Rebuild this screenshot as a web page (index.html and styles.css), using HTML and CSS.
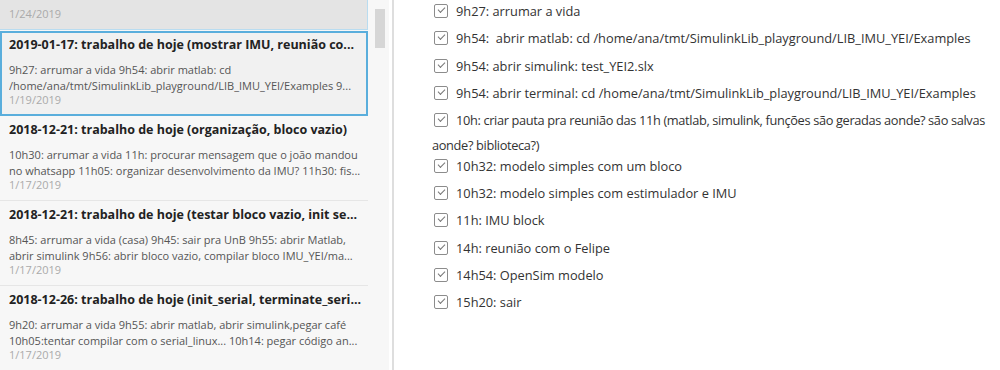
FILE: index.html
```html
<!DOCTYPE html>
<html lang="pt">
<head>
    <meta charset="UTF-8">
    <title>Notas</title>
    <link rel="stylesheet" href="styles.css">
</head>
<body>
    <div class="sidebar">
        <div class="note-list">
            <div class="note hover">
                <div class="note-date">1/24/2019</div>
            </div>
            <div class="note selected">
                <div class="note-title">2019-01-17: trabalho de hoje (mostrar IMU, reunião co...</div>
                <div class="note-body">
                    <div class="line">9h27: arrumar a vida 9h54: abrir matlab: cd</div>
                    <div class="line">/home/ana/tmt/SimulinkLib_playground/LIB_IMU_YEI/Examples 9...</div>
                </div>
                <div class="note-date">1/19/2019</div>
            </div>
            <div class="note">
                <div class="note-title">2018-12-21: trabalho de hoje (organização, bloco vazio)</div>
                <div class="note-body">
                    <div class="line">10h30: arrumar a vida 11h: procurar mensagem que o joão mandou</div>
                    <div class="line">no whatsapp 11h05: organizar desenvolvimento da IMU? 11h30: fis...</div>
                </div>
                <div class="note-date">1/17/2019</div>
            </div>
            <div class="note">
                <div class="note-title">2018-12-21: trabalho de hoje (testar bloco vazio, init se...</div>
                <div class="note-body">
                    <div class="line">8h45: arrumar a vida (casa) 9h45: sair pra UnB 9h55: abrir Matlab,</div>
                    <div class="line">abrir simulink 9h56: abrir bloco vazio, compilar bloco IMU_YEI/ma...</div>
                </div>
                <div class="note-date">1/17/2019</div>
            </div>
            <div class="note">
                <div class="note-title">2018-12-26: trabalho de hoje (init_serial, terminate_seri...</div>
                <div class="note-body">
                    <div class="line">9h20: arrumar a vida 9h55: abrir matlab, abrir simulink,pegar café</div>
                    <div class="line">10h05:tentar compilar com o serial_linux... 10h14: pegar código an...</div>
                </div>
                <div class="note-date">1/17/2019</div>
            </div>
        </div>
        <div class="scrollbar">
            <div class="thumb"></div>
        </div>
    </div>
    <div class="divider"></div>

    <div class="content">
        <div class="task"><span class="check"></span>9h27: arrumar a vida</div>
        <div class="task"><span class="check"></span>9h54:&nbsp; abrir matlab: cd /home/ana/tmt/SimulinkLib_playground/LIB_IMU_YEI/Examples</div>
        <div class="task"><span class="check"></span>9h54: abrir simulink: test_YEI2.slx</div>
        <div class="task"><span class="check"></span>9h54: abrir terminal: cd /home/ana/tmt/SimulinkLib_playground/LIB_IMU_YEI/Examples</div>
        <div class="task long"><span class="check"></span>10h: criar pauta pra reunião das 11h (matlab, simulink, funções são geradas aonde? são salvas aonde? biblioteca?)</div>
        <div class="task"><span class="check"></span>10h32: modelo simples com um bloco</div>
        <div class="task"><span class="check"></span>10h32: modelo simples com estimulador e IMU</div>
        <div class="task"><span class="check"></span>11h: IMU block</div>
        <div class="task"><span class="check"></span>14h: reunião com o Felipe</div>
        <div class="task"><span class="check"></span>14h54: OpenSim modelo</div>
        <div class="task"><span class="check"></span>15h20: sair</div>
    </div>
</body>
</html>
```

FILE: styles.css
```css
body {
    margin: 0;
    height: 370px;
    display: flex;
    overflow: hidden;
    background-color: #fff;
    font-family: 'Open Sans', 'Noto Sans', sans-serif;
    color: #333;
}

/* note list on the left */
.sidebar {
    width: 389px;
    flex-shrink: 0;
    display: flex;
    background-color: #f7f7f7;
}

.note-list {
    width: 368px;
}

.note {
    padding: 5px 4px 9px 9px;
    border-bottom: 1px solid #e6e6e6;
}

.note.hover {
    height: 16px;
    padding-top: 8px;
    padding-bottom: 5px;
    background-color: #e4e4e4;
    border: 1px solid #b9dcf0;
    border-top: none;
    border-left: none;
    margin-bottom: 1px;
}

.note.selected {
    padding: 3px 2px 8px 7px;
    border: 2px solid #5aaedc;
    background-color: #f1f1f1;
}

.note-title {
    font-size: 12.5px;
    font-weight: bold;
    line-height: 17px;
    color: #222;
    white-space: nowrap;
    overflow: hidden;
}

.note-body {
    margin-top: 9px;
    font-size: 11px;
    line-height: 16px;
    color: #555;
}

.line {
    white-space: nowrap;
    overflow: hidden;
}

.note-date {
    font-size: 11px;
    line-height: 12px;
    color: #aaa;
}

.scrollbar {
    flex: 1;
    padding: 9px 4px 0 7px;
}

.thumb {
    height: 39px;
    background-color: #d6d6d6;
}

.divider {
    width: 2px;
    margin-left: 3px;
    background-color: #dedede;
}

/* checklist on the right */
.content {
    flex: 1;
    padding: 0 0 0 38px;
    font-size: 12.8px;
    line-height: 18px;
    color: #333;
}

.task {
    margin-bottom: 0.35px;
}

.task.long {
    letter-spacing: -0.35px;
}

.check {
    display: inline-block;
    width: 12px;
    height: 12px;
    margin: 4px 8px 9px 2px;
    vertical-align: -11px;
    border: 1px solid #8c8c8c;
    border-radius: 2px;
    background-color: #fff;
    position: relative;
}

.check::after {
    content: '';
    position: absolute;
    left: 3px;
    top: 2px;
    width: 6px;
    height: 3px;
    border-left: 1.5px solid #777;
    border-bottom: 1.5px solid #777;
    transform: rotate(-45deg);
}
```
